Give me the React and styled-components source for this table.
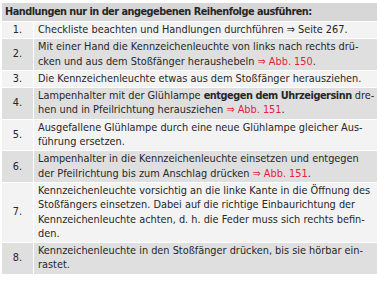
import React from 'react'
import styled, { createGlobalStyle } from 'styled-components'

const GlobalStyle = createGlobalStyle`
    body {
        margin: 0;
        background: #ffffff;
        font-family: "DejaVu Sans Condensed", "DejaVu Sans", sans-serif;
    }
`

const steps = [
    { lines: [['Checkliste beachten und Handlungen durchführen ⇒ Seite 267.']] },
    {
        lines: [
            ['Mit einer Hand die Kennzeichenleuchte von links nach rechts drü-'],
            ['cken und aus dem Stoßfänger heraushebeln ', { ref: '⇒ Abb. 150' }, '.'],
        ],
    },
    { lines: [['Die Kennzeichenleuchte etwas aus dem Stoßfänger herausziehen.']] },
    {
        lines: [
            ['Lampenhalter mit der Glühlampe ', { bold: 'entgegen dem Uhrzeigersinn' }, ' dre-'],
            ['hen und in Pfeilrichtung herausziehen ', { ref: '⇒ Abb. 151' }, '.'],
        ],
    },
    {
        lines: [
            ['Ausgefallene Glühlampe durch eine neue Glühlampe gleicher Aus-'],
            ['führung ersetzen.'],
        ],
    },
    {
        lines: [
            ['Lampenhalter in die Kennzeichenleuchte einsetzen und entgegen'],
            ['der Pfeilrichtung bis zum Anschlag drücken ', { ref: '⇒ Abb. 151' }, '.'],
        ],
    },
    {
        lines: [
            ['Kennzeichenleuchte vorsichtig an die linke Kante in die Öffnung des'],
            ['Stoßfängers einsetzen. Dabei auf die richtige Einbaurichtung der'],
            ['Kennzeichenleuchte achten, d. h. die Feder muss sich rechts befin-'],
            ['den.'],
        ],
    },
    {
        lines: [
            ['Kennzeichenleuchte in den Stoßfänger drücken, bis sie hörbar ein-'],
            ['rastet.'],
        ],
    },
]

function Part({ part }) {
    if (typeof part === 'string') return part
    if (part.ref) return <Ref>{part.ref}</Ref>
    return <Strong>{part.bold}</Strong>
}

export default function App() {
    return (
        <>
            <GlobalStyle />
            <Table>
                <colgroup>
                    <NumCol />
                    <col />
                </colgroup>
                <thead>
                    <tr>
                        <HeaderCell colSpan={2}>
                            Handlungen nur in der angegebenen Reihenfolge ausführen:
                        </HeaderCell>
                    </tr>
                </thead>
                <tbody>
                    {steps.map((step, i) => (
                        <Row key={i} $dark={i % 2 === 1}>
                            <NumCell>{i + 1}.</NumCell>
                            <TextCell>
                                {step.lines.map((line, j) => (
                                    <Line key={j}>
                                        {line.map((part, k) => (
                                            <Part key={k} part={part} />
                                        ))}
                                    </Line>
                                ))}
                            </TextCell>
                        </Row>
                    ))}
                </tbody>
            </Table>
        </>
    )
}

const Table = styled.table`
    margin: 2px 0 0 2px;
    width: 375px;
    border-collapse: separate;
    border-spacing: 0 1px;
    table-layout: fixed;
    font-size: 10.85px;
    color: #262626;
`

const NumCol = styled.col`
    width: 32px;
`

const HeaderCell = styled.th`
    background: #d7d7d7;
    height: 18px;
    padding: 0 0 0 3px;
    text-align: left;
    font-weight: bold;
    letter-spacing: -0.5px;
    line-height: 18px;
    white-space: nowrap;
`

const Row = styled.tr`
    background: ${(p) => (p.$dark ? '#dfdfdf' : '#f3f3f3')};
`

const NumCell = styled.td`
    padding: 0;
    text-align: center;
    vertical-align: middle;
    border-right: 1px solid #ffffff;
    line-height: 14.3px;
`

const TextCell = styled.td`
    padding: 1px 0 1px 4px;
    line-height: 14.3px;
    vertical-align: middle;
`

const Line = styled.div`
    white-space: nowrap;
`

const Ref = styled.span`
    color: #e5213d;
`

const Strong = styled.b`
    font-weight: bold;
    letter-spacing: -0.45px;
`
